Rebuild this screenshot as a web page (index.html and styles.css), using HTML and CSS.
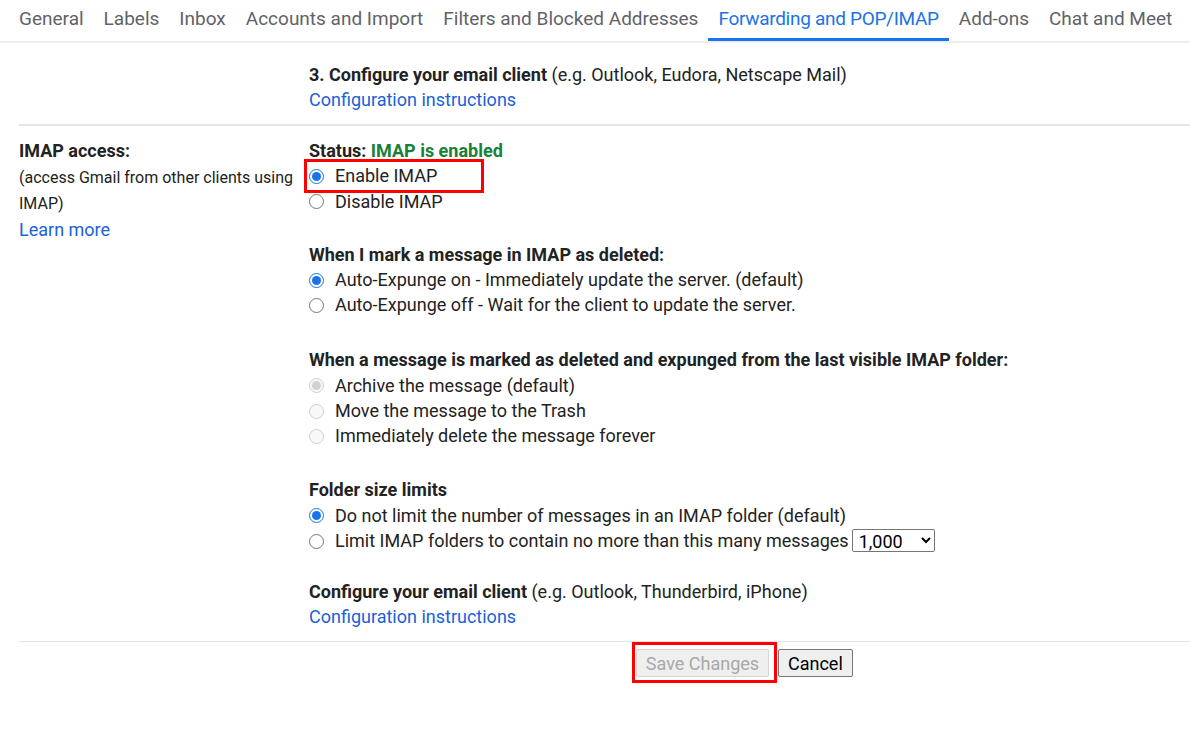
FILE: index.html
```html
<!DOCTYPE html>
<html lang="en">
<head>
<meta charset="utf-8">
<title>Settings - Forwarding and POP/IMAP</title>
<link rel="stylesheet" href="styles.css">
</head>
<body>
<nav class="tabs">
  <a class="tab">General</a>
  <a class="tab">Labels</a>
  <a class="tab">Inbox</a>
  <a class="tab">Accounts and Import</a>
  <a class="tab">Filters and Blocked Addresses</a>
  <a class="tab active">Forwarding and POP/IMAP</a>
  <a class="tab">Add-ons</a>
  <a class="tab">Chat and Meet</a>
</nav>

<div class="row first">
  <div class="label-col"></div>
  <div class="content-col">
    <div class="line"><b>3. Configure your email client</b> (e.g. Outlook, Eudora, Netscape Mail)</div>
    <div class="line"><a class="link">Configuration instructions</a></div>
  </div>
</div>

<div class="row main">
  <div class="label-col">
    <div class="line"><b>IMAP access:</b></div>
    <div class="desc">(access Gmail from other clients using IMAP)</div>
    <div class="line"><a class="link">Learn more</a></div>
  </div>
  <div class="content-col">
    <div class="group g1">
      <div class="line"><b>Status: <span class="ok">IMAP is enabled</span></b></div>
      <label class="opt highlight"><input type="radio" name="imap" checked>Enable IMAP</label>
      <label class="opt"><input type="radio" name="imap">Disable IMAP</label>
    </div>
    <div class="group g2">
      <div class="line"><b>When I mark a message in IMAP as deleted:</b></div>
      <label class="opt"><input type="radio" name="exp" checked>Auto-Expunge on - Immediately update the server. (default)</label>
      <label class="opt"><input type="radio" name="exp">Auto-Expunge off - Wait for the client to update the server.</label>
    </div>
    <div class="group g3">
      <div class="line"><b>When a message is marked as deleted and expunged from the last visible IMAP folder:</b></div>
      <label class="opt"><input type="radio" name="del" checked disabled>Archive the message (default)</label>
      <label class="opt"><input type="radio" name="del" disabled>Move the message to the Trash</label>
      <label class="opt"><input type="radio" name="del" disabled>Immediately delete the message forever</label>
    </div>
    <div class="group g4">
      <div class="line"><b>Folder size limits</b></div>
      <label class="opt"><input type="radio" name="lim" checked>Do not limit the number of messages in an IMAP folder (default)</label>
      <label class="opt"><input type="radio" name="lim">Limit IMAP folders to contain no more than this many messages<select class="sel"><option>1,000</option><option>2,000</option><option>5,000</option><option>10,000</option></select></label>
    </div>
    <div class="group last">
      <div class="line"><b>Configure your email client</b> (e.g. Outlook, Thunderbird, iPhone)</div>
      <div class="line"><a class="link">Configuration instructions</a></div>
    </div>
  </div>
</div>

<div class="actions">
  <span class="save-wrap"><button class="btn" disabled>Save Changes</button></span>
  <button class="btn">Cancel</button>
</div>
</body>
</html>
```

FILE: styles.css
```css
html, body {
  margin: 0;
  padding: 0;
  background: #fff;
}
body {
  font-family: Roboto, "Liberation Sans", Arial, sans-serif;
  font-size: 18px;
  color: #222;
  padding-bottom: 40px;
}
.tabs {
  display: flex;
  padding-left: 9px;
  height: 41px;
  border-bottom: 2px solid #eeeeee;
}
.tab {
  display: block;
  padding: 0 10px;
  font-family: Roboto, "Liberation Sans", sans-serif;
  font-size: 19px;
  line-height: 38px;
  color: #5f6368;
  white-space: nowrap;
  border-bottom: 3px solid transparent;
}
.tab.active {
  color: #1a73e8;
  border-bottom-color: #1a73e8;
  letter-spacing: -0.3px;
}
.row {
  display: grid;
  grid-template-columns: 290px 1fr;
  margin-left: 19px;
  padding: 12px 0 11px;
  border-top: 2px solid #e6e6e6;
}
.row.first {
  border-top: none;
  padding: 19px 0 11px;
}
.row.main {
  padding-bottom: 12px;
}
.line {
  line-height: 25.4px;
  white-space: nowrap;
}
b {
  font-weight: 700;
}
.ok {
  color: #188038;
}
.desc {
  font-size: 16px;
  line-height: 26px;
  padding-top: 2px;
}
.link {
  color: #1a62d8;
  cursor: pointer;
}
.g1 { margin-bottom: 28px; }
.g2 { margin-bottom: 30px; }
.g3 { margin-bottom: 29px; }
.g4 { margin-bottom: 25.5px; }
.opt {
  display: flex;
  align-items: center;
  height: 25.2px;
  white-space: nowrap;
  position: relative;
}
.opt input[type=radio] {
  width: 15px;
  height: 15px;
  margin: 1px 11px 0 0;
  accent-color: #1a73e8;
}
.highlight::after {
  content: "";
  position: absolute;
  left: -5px;
  top: -4px;
  width: 180px;
  height: 34px;
  box-sizing: border-box;
  border: 3px solid #ff0000;
  pointer-events: none;
}
.sel {
  margin-left: 3px;
  width: 83px;
  height: 23px;
  font-family: Roboto, "Liberation Sans", sans-serif;
  font-size: 18px;
  color: #000;
  border: 1px solid #767676;
  border-radius: 2px;
  background: #fff;
  padding: 0 2px;
}
.actions {
  display: flex;
  align-items: flex-start;
  gap: 9px;
  margin-left: 19px;
  border-top: 1px solid #e6e6e6;
  padding: 7px 0 0 617px;
}
.save-wrap {
  position: relative;
  display: block;
}
.save-wrap::after {
  content: "";
  position: absolute;
  left: -4px;
  top: -7px;
  right: -8px;
  bottom: -6px;
  border: 3px solid #ff0000;
  pointer-events: none;
}
.btn {
  display: block;
  font-family: Roboto, "Liberation Sans", sans-serif;
  font-size: 18px;
  height: 28px;
  padding: 0 9px;
  background: #efefef;
  border: 1px solid #767676;
  border-radius: 2px;
  color: #000;
  white-space: nowrap;
}
.btn:disabled {
  color: #a8a8a8;
  border-color: #d4d4d4;
  background: #efefef;
  width: 133px;
  padding: 0;
}
```
